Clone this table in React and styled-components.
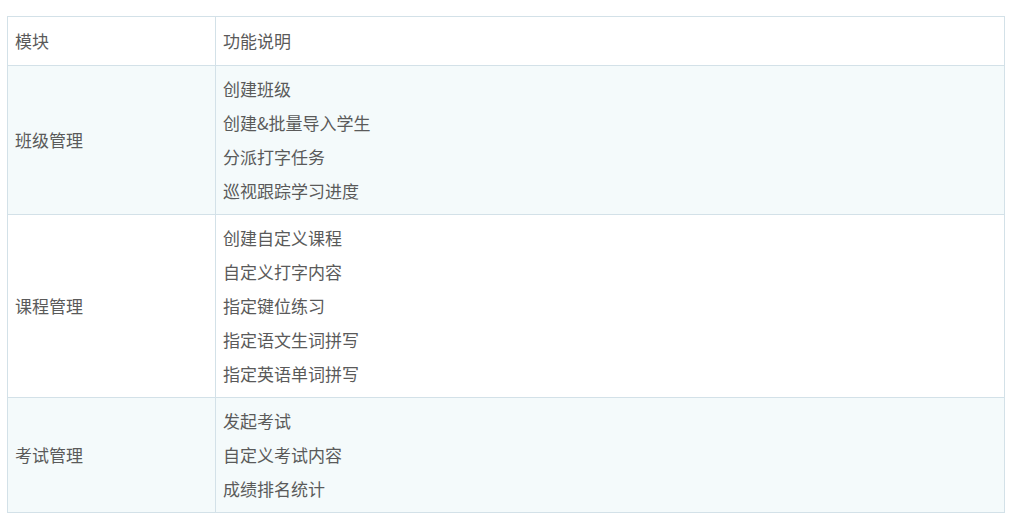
import React from "react";
import styled, { createGlobalStyle } from "styled-components";

const GlobalStyle = createGlobalStyle`
  body {
    margin: 0;
    background: #fff;
    font-family: "Noto Sans CJK SC", "Microsoft YaHei", sans-serif;
  }
`;

const Page = styled.div`
  padding: 16px 10px 0 7px;
`;

const Table = styled.table`
  width: 998px;
  border-collapse: collapse;
  font-size: 17px;
  color: #5a5a5a;
`;

const Row = styled.tr`
  background: ${({ $shaded }) => ($shaded ? "#f4fafb" : "#fff")};
`;

const Cell = styled.td`
  border: 1px solid #d3e1e8;
  padding: ${({ $head }) => ($head ? "7px 7px" : "6px 7px")};
  vertical-align: middle;
  text-align: left;
  line-height: 34px;
  width: ${({ $first }) => ($first ? "193px" : "auto")};
`;

const Item = styled.div`
  line-height: 34px;
`;

const rows = [
  { name: "班级管理", items: ["创建班级", "创建&批量导入学生", "分派打字任务", "巡视跟踪学习进度"] },
  { name: "课程管理", items: ["创建自定义课程", "自定义打字内容", "指定键位练习", "指定语文生词拼写", "指定英语单词拼写"] },
  { name: "考试管理", items: ["发起考试", "自定义考试内容", "成绩排名统计"] },
];

const App = () => (
  <Page>
    <GlobalStyle />
    <Table>
      <tbody>
        <Row>
          <Cell $head $first>模块</Cell>
          <Cell $head>功能说明</Cell>
        </Row>
        {rows.map((r, i) => (
          <Row key={r.name} $shaded={i % 2 === 0}>
            <Cell $first>{r.name}</Cell>
            <Cell>
              {r.items.map((t) => (
                <Item key={t}>{t}</Item>
              ))}
            </Cell>
          </Row>
        ))}
      </tbody>
    </Table>
  </Page>
);

export default App;
